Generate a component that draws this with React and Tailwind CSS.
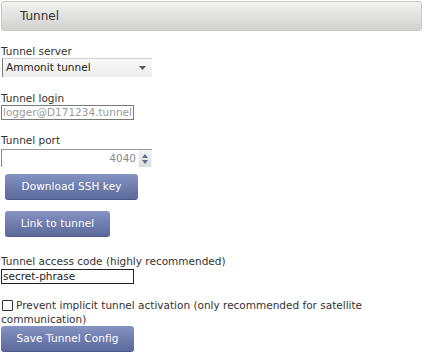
import React from "react";

const font = { fontFamily: '"DejaVu Sans", Verdana, sans-serif' };

function Label({ children, className = "" }) {
  return (
    <div className={"text-[10.5px] leading-[12px] text-[#333] " + className}>
      {children}
    </div>
  );
}

function Button({ children, className = "" }) {
  return (
    <button
      className={
        "h-[26px] rounded-[3px] border-b border-[#4d5a88] bg-linear-to-b from-[#8593c3] to-[#5c6a9b] text-[10.5px] text-white tracking-[0.1px] " +
        className
      }
    >
      {children}
    </button>
  );
}

export default function App() {
  return (
    <div className="w-[424px] h-[352px] bg-white overflow-hidden" style={font}>
      {/* Header */}
      <div className="mx-[1px] mt-[1px] w-[421px] h-[30px] rounded-[3px] border border-[#c9c9c8] bg-linear-to-b from-[#f2f2f1] to-[#d1d2d0] pl-[18px] text-[12px] leading-[28px] text-[#333]">
        Tunnel
      </div>

      <div className="px-[1px]">
        <Label className="mt-[14px]">Tunnel server</Label>
        <div className="mt-[1px] ml-[1px] w-[150px] h-[19px] flex items-center justify-between border-t border-l border-t-[#d0d0d0] border-l-[#7b7b7b] bg-linear-to-b from-[#fafafa] to-[#ececec] pl-[3px] pr-[6px] text-[10.5px] text-[#222]">
          <span>Ammonit tunnel</span>
          <svg width="7" height="4" viewBox="0 0 7 4">
            <path d="M0 0h7L3.5 4z" fill="#555" />
          </svg>
        </div>

        <Label className="mt-[15px]">Tunnel login</Label>
        <div className="mt-[1px] w-[133px] h-[15px] border border-[#7a7a7a] overflow-hidden whitespace-nowrap pl-[1px] text-[10.5px] leading-[13px] text-[#9a9a9a]">
          logger@D171234.tunnel.
        </div>

        <Label className="mt-[14px]">Tunnel port</Label>
        <div className="mt-[3px] w-[151px] h-[18px] flex border-t border-l border-t-[#9c9c9c] border-l-[#8a8a8a] bg-[#f2f2f2]">
          <div className="w-[136px] bg-white text-right pr-[2px] text-[10.5px] leading-[17px] text-[#8a8a8a]">
            4040
          </div>
          <div className="ml-[1px] w-[12px] flex flex-col items-center justify-center gap-[2px] bg-linear-to-b from-[#f4f4f4] to-[#dcdcdc]">
            <svg width="6" height="4" viewBox="0 0 6 4">
              <path d="M3 0L6 4H0z" fill="#5a6d8e" />
            </svg>
            <svg width="6" height="4" viewBox="0 0 6 4">
              <path d="M0 0h6L3 4z" fill="#5a6d8e" />
            </svg>
          </div>
        </div>

        <Button className="mt-[7px] ml-[4px] w-[133px] block">Download SSH key</Button>
        <Button className="mt-[11px] ml-[4px] w-[105px] block">Link to tunnel</Button>

        <Label className="mt-[18px]">Tunnel access code (highly recommended)</Label>
        <div className="mt-[2px] w-[133px] h-[15px] border border-[#222] pl-[1px] text-[10.5px] leading-[13px] text-[#222]">
          secret-phrase
        </div>

        <div className="mt-[14px] text-[10.5px] leading-[14px] text-[#333] pr-[40px]">
          <span className="inline-block align-[-2px] ml-[1px] mr-[3px] w-[11px] h-[11px] border border-[#333] rounded-[1px] bg-white"></span>
          Prevent implicit tunnel activation (only recommended for satellite communication)
        </div>

        <Button className="mt-[0px] w-[133px] block">Save Tunnel Config</Button>
      </div>
    </div>
  );
}
